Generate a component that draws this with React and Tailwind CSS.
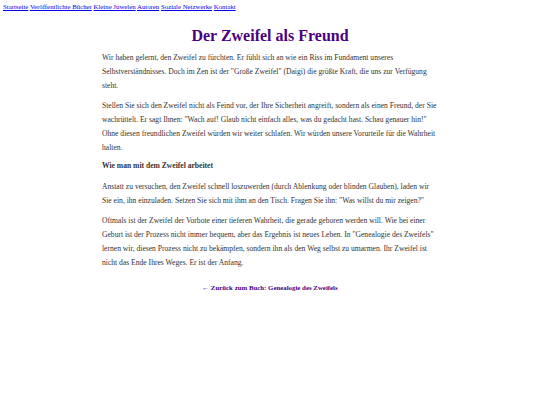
import React from "react";

const links = [
  "Startseite",
  "Veröffentlichte Bücher",
  "Kleine Juwelen",
  "Autoren",
  "Soziale Netzwerke",
  "Kontakt",
];

const App = () => {
  return (
    <div className="min-h-[405px] bg-white font-['Liberation_Serif',serif]">
      <nav className="px-[3px] text-[6.8px] leading-[14px]">
        {links.map((l) => (
          <React.Fragment key={l}>
            <a href="#" className="text-[#0000ee] underline">
              {l}
            </a>{" "}
          </React.Fragment>
        ))}
      </nav>

      <main className="w-[336px] mx-auto text-[#333] text-[7.6px] leading-[14px]">
        <h1 className="mt-[12px] mb-[5px] text-center text-[16px] leading-[20px] font-bold text-[#4b0082]">
          Der Zweifel als Freund
        </h1>
        <p className="mb-[6px]">
          Wir haben gelernt, den Zweifel zu fürchten. Er fühlt sich an wie ein
          Riss im Fundament unseres Selbstverständnisses. Doch im Zen ist der
          "Große Zweifel" (Daigi) die größte Kraft, die uns zur Verfügung
          steht.
        </p>
        <p className="mb-[4px]">
          Stellen Sie sich den Zweifel nicht als Feind vor, der Ihre Sicherheit
          angreift, sondern als einen Freund, der Sie wachrüttelt. Er sagt
          Ihnen: "Wach auf! Glaub nicht einfach alles, was du gedacht hast.
          Schau genauer hin!" Ohne diesen freundlichen Zweifel würden wir
          weiter schlafen. Wir würden unsere Vorurteile für die Wahrheit
          halten.
        </p>
        <h3 className="mb-[7px] font-bold">Wie man mit dem Zweifel arbeitet</h3>
        <p className="mb-[6px]">
          Anstatt zu versuchen, den Zweifel schnell loszuwerden (durch
          Ablenkung oder blinden Glauben), laden wir Sie ein, ihn einzuladen.
          Setzen Sie sich mit ihm an den Tisch. Fragen Sie ihn: "Was willst du
          mir zeigen?"
        </p>
        <p className="mb-[6px]">
          Oftmals ist der Zweifel der Vorbote einer tieferen Wahrheit, die
          gerade geboren werden will. Wie bei einer Geburt ist der Prozess
          nicht immer bequem, aber das Ergebnis ist neues Leben. In "Genealogie
          des Zweifels" lernen wir, diesen Prozess nicht zu bekämpfen, sondern
          ihn als den Weg selbst zu umarmen. Ihr Zweifel ist nicht das Ende
          Ihres Weges. Er ist der Anfang.
        </p>
        <div className="mt-[11px] text-center text-[6.85px]">
          <a href="#" className="font-bold text-[#4b0082]">
            ← Zurück zum Buch: Genealogie des Zweifels
          </a>
        </div>
      </main>
    </div>
  );
};

export default App;
